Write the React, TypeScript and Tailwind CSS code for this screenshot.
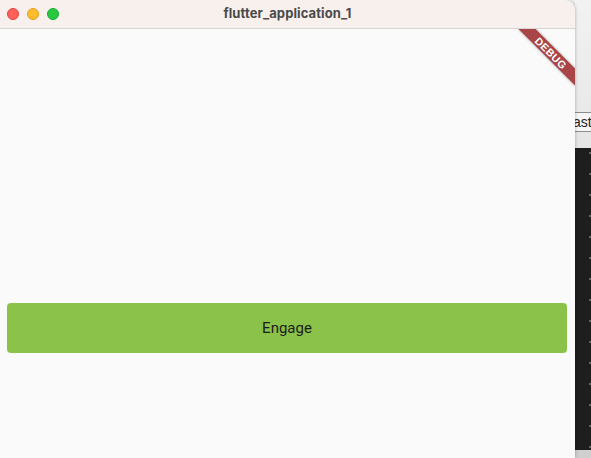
export default function App() {
  return (
    <div className="flex w-[591px] h-[458px] overflow-hidden bg-[#ececec] font-['Inter',sans-serif]">
      {/* app window */}
      <div className="relative z-10 flex flex-col w-[575px] h-full rounded-tr-[10px] overflow-hidden shadow-[1px_0_3px_rgba(0,0,0,0.18)]">
        <div className="relative flex items-center h-[29px] shrink-0 bg-[#f7f0ed] border-b border-[#d7d4d3]">
          <div className="flex items-center gap-[8px] pl-[7px]">
            <span className="w-[12px] h-[12px] rounded-full bg-[#fe5f57] border border-[#e2463f]" />
            <span className="w-[12px] h-[12px] rounded-full bg-[#febc2e] border border-[#e1a116]" />
            <span className="w-[12px] h-[12px] rounded-full bg-[#28c840] border border-[#14ae2c]" />
          </div>
          <div className="absolute inset-0 flex items-center justify-center text-[13px] font-bold text-[#4a4a4a] tracking-[0.1px]">
            flutter_application_1
          </div>
        </div>

        <div className="relative flex-1 flex flex-col bg-[#fafafa] overflow-hidden pt-[274px] pl-[7px] pr-[8px]">
          <button className="h-[50px] w-full rounded-[4px] bg-[#8bc34a] text-[15px] text-[#1b1b1b] font-['Roboto',sans-serif]">
            Engage
          </button>

          {/* debug banner */}
          <div className="absolute top-[18px] right-[-16px] w-[80px] h-[12px] rotate-45 bg-[#a94447] shadow-[0_0_3px_rgba(0,0,0,0.35)] flex items-center justify-center">
            <span className="text-[10.5px] leading-none font-black text-white tracking-[0.4px] font-['Liberation_Sans',sans-serif]">
              DEBUG
            </span>
          </div>
        </div>
      </div>

      {/* window behind */}
      <div className="flex flex-col w-[16px] h-full">
        <div className="h-[112px] bg-gradient-to-b from-[#f2f2f2] to-[#e9e9e9]" />
        <div className="h-[20px] flex items-center bg-[#f6f6f6] border-y border-[#8c8c8c] text-[14px] text-[#222] font-['Liberation_Sans',sans-serif] whitespace-nowrap overflow-hidden leading-none">
          <span className="-ml-[2px]">aste</span>
        </div>
        <div className="h-[16px] bg-[#e6e6e6]" />
        <div className="flex-1 bg-[#1e1e1e] flex flex-col items-end gap-[19px] pt-[4px]">
          {Array.from({ length: 15 }).map((_, i) => (
            <span key={i} className="w-[2px] h-[2px] bg-[#5a6570]" />
          ))}
        </div>
        <div className="h-[8px] bg-[#cfcfcf]" />
      </div>
    </div>
  );
}
